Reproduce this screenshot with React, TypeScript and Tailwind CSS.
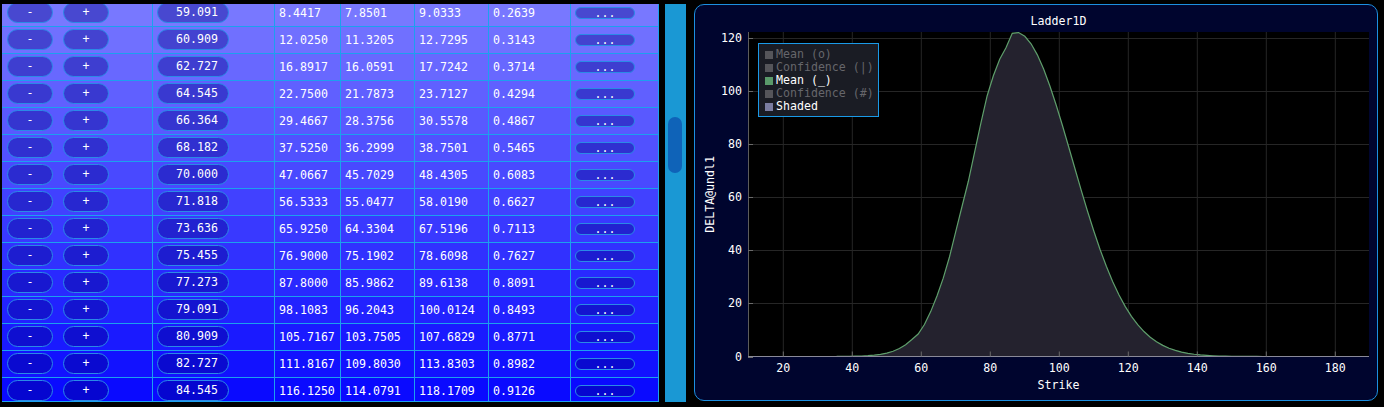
import React from "react";

const rows: string[][] = [
  ["59.091", "8.4417", "7.8501", "9.0333", "0.2639"],
  ["60.909", "12.0250", "11.3205", "12.7295", "0.3143"],
  ["62.727", "16.8917", "16.0591", "17.7242", "0.3714"],
  ["64.545", "22.7500", "21.7873", "23.7127", "0.4294"],
  ["66.364", "29.4667", "28.3756", "30.5578", "0.4867"],
  ["68.182", "37.5250", "36.2999", "38.7501", "0.5465"],
  ["70.000", "47.0667", "45.7029", "48.4305", "0.6083"],
  ["71.818", "56.5333", "55.0477", "58.0190", "0.6627"],
  ["73.636", "65.9250", "64.3304", "67.5196", "0.7113"],
  ["75.455", "76.9000", "75.1902", "78.6098", "0.7627"],
  ["77.273", "87.8000", "85.9862", "89.6138", "0.8091"],
  ["79.091", "98.1083", "96.2043", "100.0124", "0.8493"],
  ["80.909", "105.7167", "103.7505", "107.6829", "0.8771"],
  ["82.727", "111.8167", "109.8030", "113.8303", "0.8982"],
  ["84.545", "116.1250", "114.0791", "118.1709", "0.9126"],
];

function Table() {
  return (
    <div className="h-[398px] w-[657px] shrink-0 overflow-hidden border-b border-[#1ca0ee]">
      <div className="mt-[-4px]">
        {rows.map((r, i) => {
          const c = Math.round(120 - (i * 110) / 14);
          return (
            <div
              key={i}
              className="flex h-[27px] border-b border-[#1ca0ee]"
              style={{ backgroundColor: `rgb(${c},${c},255)` }}
            >
              <div className="flex w-[151px] gap-[10px] border-r border-[#1ca0ee] pl-[5px] pt-[2px]">
                <div className="flex h-[21px] w-[46px] items-center justify-center rounded-full border border-[#2a8ae6] bg-[rgba(0,0,137,0.4)]">
                  -
                </div>
                <div className="flex h-[21px] w-[46px] items-center justify-center rounded-full border border-[#2a8ae6] bg-[rgba(0,0,137,0.4)]">
                  +
                </div>
              </div>
              <div className="w-[122px] border-r border-[#1ca0ee] pl-[4px] pt-[2px]">
                <div className="flex h-[21px] w-[72px] items-center justify-end rounded-full border border-[#2a8ae6] bg-[rgba(0,0,137,0.4)] pr-[10px]">
                  {r[0]}
                </div>
              </div>
              <div className="flex w-[66px] items-center border-r border-[#1ca0ee] pl-[4px]">{r[1]}</div>
              <div className="flex w-[74px] items-center border-r border-[#1ca0ee] pl-[4px]">{r[2]}</div>
              <div className="flex w-[74px] items-center border-r border-[#1ca0ee] pl-[4px]">{r[3]}</div>
              <div className="flex w-[82px] items-center border-r border-[#1ca0ee] pl-[4px]">{r[4]}</div>
              <div className="flex w-[88px] items-center border-r border-[#1ca0ee] pl-[4px]">
                <div className="flex h-[12px] w-[60px] items-start justify-center rounded-full border border-[#2a8ae6] bg-[rgba(0,0,137,0.4)] leading-[10px]">
                  ...
                </div>
              </div>
            </div>
          );
        })}
      </div>
    </div>
  );
}

const tableMap: Record<string, number> = {};
rows.forEach((r) => {
  tableMap[r[0]] = parseFloat(r[1]);
});

function f(v: number): number {
  const mu = 87.4;
  const w = v <= mu ? 12.4 : 16.4;
  const d = v - mu;
  return 122 * Math.exp(-(d * d) / (2 * w * w));
}

const X = (v: number) => 3.45 * v - 3.7;
const Y = (v: number) => 324.5 - 2.658 * v;

function buildData() {
  const pts: [number, number][] = [];
  for (let k = 14; k <= 91; k++) {
    const v = 10 + (k * 20) / 11;
    const key = v.toFixed(3);
    const val = tableMap[key] !== undefined ? tableMap[key] : f(v);
    pts.push([v, val]);
  }
  return pts;
}

function Chart() {
  const pts = buildData();
  const line = pts
    .map((p, i) => `${i === 0 ? "M" : "L"}${X(p[0]).toFixed(2)},${Y(p[1]).toFixed(2)}`)
    .join(" ");
  const fill =
    `M${X(pts[0][0]).toFixed(2)},${Y(0)} ` +
    pts.map((p) => `L${X(p[0]).toFixed(2)},${Y(p[1]).toFixed(2)}`).join(" ") +
    ` L${X(pts[pts.length - 1][0]).toFixed(2)},${Y(0)} Z`;
  const xt = [20, 40, 60, 80, 100, 120, 140, 160, 180];
  const yt = [0, 20, 40, 60, 80, 100, 120];
  const legend = [
    { t: "Mean (o)", sq: "#55555a", c: "#66666b" },
    { t: "Confidence (|)", sq: "#55555a", c: "#66666b" },
    { t: "Mean (_)", sq: "#5a9a6a", c: "#ffffff" },
    { t: "Confidence (#)", sq: "#55555a", c: "#66666b" },
    { t: "Shaded", sq: "#7a7ca0", c: "#ffffff" },
  ];
  return (
    <div className="ml-[8px] flex h-[397px] w-[684px] shrink-0 flex-col rounded-[10px] border border-[#1c8fe0] bg-[#00052e]">
      <div className="ml-[53px] mr-[8px] h-[27px] pt-[10px] text-center">Ladder1D</div>
      <div className="flex h-[346px]">
        <div className="flex h-[325px] w-[23px] items-center justify-center pl-[8px]">
          <span className="rotate-180 whitespace-nowrap [writing-mode:vertical-rl]">DELTA@undl1</span>
        </div>
        <div className="relative h-[346px] w-[659px]">
          <svg width="659" height="346" className="block">
            <rect x="30" y="0" width="621" height="325" fill="#000000" />
            {xt.map((v) => (
              <line key={"gx" + v} x1={X(v)} x2={X(v)} y1={0} y2={325} stroke="#262626" strokeWidth="1" />
            ))}
            {yt.slice(1).map((v) => (
              <line
                key={"gy" + v}
                x1={30}
                x2={651}
                y1={Math.round(Y(v)) + 0.5}
                y2={Math.round(Y(v)) + 0.5}
                stroke="#262626"
                strokeWidth="1"
              />
            ))}
            <path d={fill} fill="#24222e" />
            <path d={line} fill="none" stroke="#5f9f6c" strokeWidth="1.2" />
            <line x1={30.5} x2={30.5} y1={0} y2={325} stroke="#5c5c5c" strokeWidth="1" />
            <line x1={30} x2={651} y1={324.5} y2={324.5} stroke="#8a8a98" strokeWidth="1" />
            {xt.map((v) => (
              <line key={"tx" + v} x1={X(v)} x2={X(v)} y1={319.5} y2={324.5} stroke="#6a6a6a" strokeWidth="1" />
            ))}
            {yt.map((v) => (
              <line
                key={"ty" + v}
                x1={30}
                x2={35}
                y1={Math.round(Y(v)) + 0.5}
                y2={Math.round(Y(v)) + 0.5}
                stroke="#6a6a6a"
                strokeWidth="1"
              />
            ))}
            {yt.map((v) => (
              <text key={"ly" + v} x={24} y={Y(v) + 4} textAnchor="end" fill="#ffffff" fontSize="11.6">
                {v}
              </text>
            ))}
            {xt.map((v) => (
              <text key={"lx" + v} x={X(v)} y={340} textAnchor="middle" fill="#ffffff" fontSize="11.6">
                {v}
              </text>
            ))}
          </svg>
          <div className="absolute left-[40px] top-[11px] h-[74px] w-[121px] border border-[#1a9ae8] bg-[#1a1c24] pl-[6px] pt-[4px]">
            {legend.map((l) => (
              <div key={l.t} className="flex h-[13px] items-center">
                <div className="h-[8px] w-[8px]" style={{ backgroundColor: l.sq }} />
                <span className="ml-[3px] whitespace-nowrap" style={{ color: l.c }}>
                  {l.t}
                </span>
              </div>
            ))}
          </div>
        </div>
      </div>
      <div className="ml-[53px] mr-[8px] pt-[1px] text-center">Strike</div>
    </div>
  );
}

export default function App() {
  return (
    <div className="flex h-[407px] w-[1384px] overflow-hidden bg-black pl-[2px] pt-[4px] font-['DejaVu_Sans_Mono',monospace] text-[11.6px] leading-[13px] text-white">
      <Table />
      <div className="ml-[6px] h-[398px] w-[21px] shrink-0 bg-[#1a98d4] pl-[3px] pt-[113px]">
        <div className="h-[56px] w-[14px] rounded-full bg-[#0f63b8]" />
      </div>
      <Chart />
    </div>
  );
}
